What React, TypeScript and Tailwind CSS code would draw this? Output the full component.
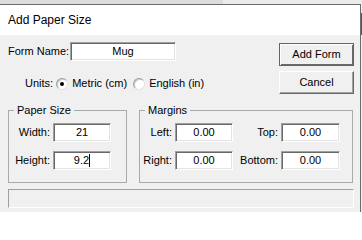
import React from 'react';

const sunken = 'bg-white border border-t-[#a0a0a0] border-l-[#a0a0a0] border-b-white border-r-white shadow-[inset_1px_1px_0_#696969,inset_-1px_-1px_0_#e3e3e3]';

const Field: React.FC<{ value: string, width: string, caret?: boolean }> = ({ value, width, caret }) => (
    <div className={`${sunken} ${width} h-[19px] flex items-center justify-center text-[11px] leading-none text-black`}>
        <span>{value}</span>
        {caret && <span className="inline-block w-px h-[13px] bg-black"></span>}
    </div>
);

const Radio: React.FC<{ checked?: boolean }> = ({ checked }) => (
    <span className="w-[12px] h-[12px] rounded-full bg-white border border-t-[#a0a0a0] border-l-[#a0a0a0] border-b-[#e3e3e3] border-r-[#e3e3e3] shadow-[inset_1px_1px_0_#c8c8c8] flex items-center justify-center">
        {checked && <span className="w-[4px] h-[4px] rounded-full bg-black"></span>}
    </span>
);

const Row: React.FC<{ label: string, labelW: string, children: React.ReactNode }> = ({ label, labelW, children }) => (
    <div className="flex items-center">
        <span className={`${labelW} text-right pr-[3px] text-[11px]`}>{label}</span>
        {children}
    </div>
);

const App: React.FC = () => {
    return (
        <div className="w-[362px] h-[212px] overflow-hidden bg-[#f0f0f0] font-['Liberation_Sans',Arial,sans-serif] text-black flex flex-col">
            <div className="flex h-[4px] shrink-0">
                <div className="w-[223px] bg-[#dcdcdc]"></div>
                <div className="flex-1 bg-[#ebebeb]"></div>
            </div>
            <div className="flex flex-1">
                <div className="w-[361px] border-t border-r border-[#6b6b6b] flex flex-col">
                    <div className="h-[30px] bg-white flex items-center pl-[8px] text-[12px] shrink-0">Add Paper Size</div>

                    <div className="flex-1 bg-[#f0f0f0] pl-[8px] pr-[6px] text-[11px]">
                        <div className="flex h-[69px]">
                            <div className="flex flex-col pt-[7px]">
                                <div className="flex items-center">
                                    <span className="w-[62px]">Form Name:</span>
                                    <Field value="Mug" width="w-[106px]" />
                                </div>
                                <div className="flex items-center mt-[16px] pl-[17px] h-[13px]">
                                    <span>Units:</span>
                                    <span className="ml-[3px]"><Radio checked /></span>
                                    <span className="ml-[4px]">Metric (cm)</span>
                                    <span className="ml-[6px]"><Radio /></span>
                                    <span className="ml-[4px]">English (in)</span>
                                </div>
                            </div>
                            <div className="ml-auto flex flex-col pt-[8px] gap-[5px]">
                                <button className="w-[75px] h-[23px] bg-[#f0f0f0] border border-[#646464] shadow-[inset_1px_1px_0_#ffffff,inset_-1px_-1px_0_#696969] text-[11px]">Add Form</button>
                                <button className="w-[75px] h-[23px] bg-[#f0f0f0] border border-t-white border-l-white border-b-[#696969] border-r-[#696969] shadow-[inset_-1px_-1px_0_#a0a0a0] text-[11px]">Cancel</button>
                            </div>
                        </div>

                        <div className="flex gap-[12px]">
                            <fieldset className="w-[119px] border border-[#a9a9a9] pb-[12px]">
                                <legend className="ml-[5px] px-[3px] text-[11px] leading-[13px]">Paper Size</legend>
                                <div className="flex flex-col gap-[9px] mt-[6px]">
                                    <Row label="Width:" labelW="w-[44px]"><Field value="21" width="w-[58px]" /></Row>
                                    <Row label="Height:" labelW="w-[44px]"><Field value="9.2" width="w-[58px]" caret /></Row>
                                </div>
                            </fieldset>
                            <fieldset className="w-[214px] border border-[#a9a9a9] pb-[12px]">
                                <legend className="ml-[5px] px-[3px] text-[11px] leading-[13px]">Margins</legend>
                                <div className="flex flex-col gap-[9px] mt-[6px]">
                                    <div className="flex">
                                        <Row label="Left:" labelW="w-[35px]"><Field value="0.00" width="w-[58px]" /></Row>
                                        <Row label="Top:" labelW="w-[48px]"><Field value="0.00" width="w-[59px]" /></Row>
                                    </div>
                                    <div className="flex">
                                        <Row label="Right:" labelW="w-[35px]"><Field value="0.00" width="w-[58px]" /></Row>
                                        <Row label="Bottom:" labelW="w-[48px]"><Field value="0.00" width="w-[59px]" /></Row>
                                    </div>
                                </div>
                            </fieldset>
                        </div>

                        <div className="mt-[6px] w-[346px] h-[19px] border border-t-[#a0a0a0] border-l-[#a0a0a0] border-b-white border-r-white"></div>
                    </div>
                </div>
                <div className="w-px flex flex-col">
                    <div className="h-[9px]"></div>
                    <div className="h-[22px] bg-[#b0285a]"></div>
                </div>
            </div>
        </div>
    );
};

export default App;
